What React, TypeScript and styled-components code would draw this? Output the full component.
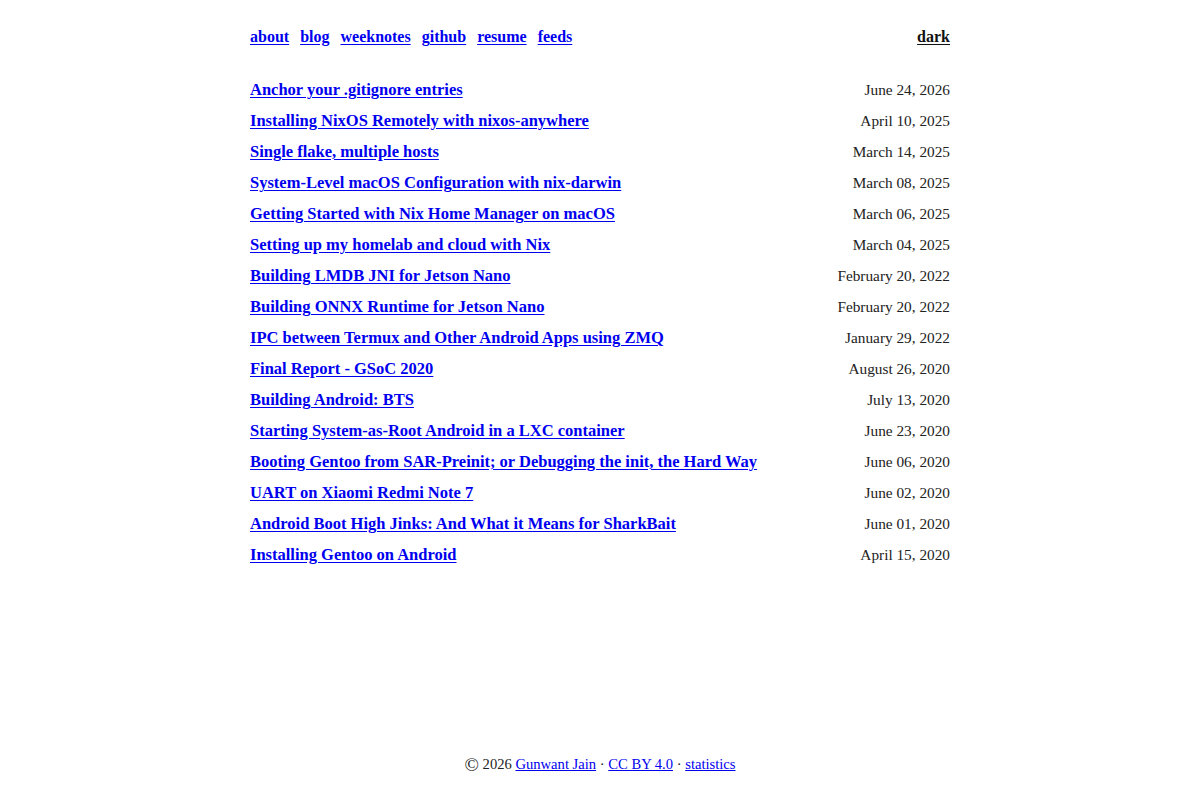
import React from "react";
import styled, { createGlobalStyle } from "styled-components";

const Global = createGlobalStyle`
  html, body { margin: 0; padding: 0; background: #fff; }
  body {
    font-family: "Liberation Serif", "Times New Roman", serif;
    color: #111;
  }
`;

const Page = styled.div`
  min-height: 800px;
  display: flex;
  flex-direction: column;
  align-items: center;
`;

const Main = styled.main`
  width: 700px;
  flex: 1;
`;

const Nav = styled.nav`
  display: flex;
  justify-content: space-between;
  align-items: baseline;
  padding-top: 28px;
  height: 24px;
  margin-bottom: 28px;
`;

const NavLinks = styled.div`
  display: flex;
  gap: 11px;
`;

const NavLink = styled.a<{ $plain?: boolean }>`
  font-size: 16px;
  font-weight: 700;
  color: ${(p) => (p.$plain ? "#111" : "#0000ee")};
  text-decoration: underline;
  text-underline-offset: 2px;
`;

const PostList = styled.ul`
  list-style: none;
  margin: 0;
  padding: 0;
  display: flex;
  flex-direction: column;
`;

const Post = styled.li`
  display: flex;
  justify-content: space-between;
  align-items: baseline;
  height: 31px;
`;

const PostTitle = styled.a`
  font-size: 16.5px;
  font-weight: 700;
  color: #0000ee;
  text-decoration: underline;
  text-underline-offset: 2px;
`;

const PostDate = styled.span`
  font-size: 15.3px;
  color: #222;
`;

const Footer = styled.footer`
  font-size: 14.6px;
  color: #222;
  padding: 0 0 26px;
  text-align: center;
`;

const Copy = styled.span`
  font-size: 19px;
  line-height: 1;
  vertical-align: -2px;
`;

const FootLink = styled.a`
  color: #0000ee;
  text-decoration: underline;
`;

const posts: [string, string][] = [
  ["Anchor your .gitignore entries", "June 24, 2026"],
  ["Installing NixOS Remotely with nixos-anywhere", "April 10, 2025"],
  ["Single flake, multiple hosts", "March 14, 2025"],
  ["System-Level macOS Configuration with nix-darwin", "March 08, 2025"],
  ["Getting Started with Nix Home Manager on macOS", "March 06, 2025"],
  ["Setting up my homelab and cloud with Nix", "March 04, 2025"],
  ["Building LMDB JNI for Jetson Nano", "February 20, 2022"],
  ["Building ONNX Runtime for Jetson Nano", "February 20, 2022"],
  ["IPC between Termux and Other Android Apps using ZMQ", "January 29, 2022"],
  ["Final Report - GSoC 2020", "August 26, 2020"],
  ["Building Android: BTS", "July 13, 2020"],
  ["Starting System-as-Root Android in a LXC container", "June 23, 2020"],
  ["Booting Gentoo from SAR-Preinit; or Debugging the init, the Hard Way", "June 06, 2020"],
  ["UART on Xiaomi Redmi Note 7", "June 02, 2020"],
  ["Android Boot High Jinks: And What it Means for SharkBait", "June 01, 2020"],
  ["Installing Gentoo on Android", "April 15, 2020"],
];

export default function App() {
  return (
    <Page>
      <Global />
      <Main>
        <Nav>
          <NavLinks>
            {["about", "blog", "weeknotes", "github", "resume", "feeds"].map((l) => (
              <NavLink key={l} href="#">{l}</NavLink>
            ))}
          </NavLinks>
          <NavLink $plain href="#">dark</NavLink>
        </Nav>
        <PostList>
          {posts.map(([t, d]) => (
            <Post key={t}>
              <PostTitle href="#">{t}</PostTitle>
              <PostDate>{d}</PostDate>
            </Post>
          ))}
        </PostList>
      </Main>
      <Footer>
        <Copy>©</Copy> 2026 <FootLink href="#">Gunwant Jain</FootLink> · <FootLink href="#">CC BY 4.0</FootLink> ·{" "}
        <FootLink href="#">statistics</FootLink>
      </Footer>
    </Page>
  );
}
